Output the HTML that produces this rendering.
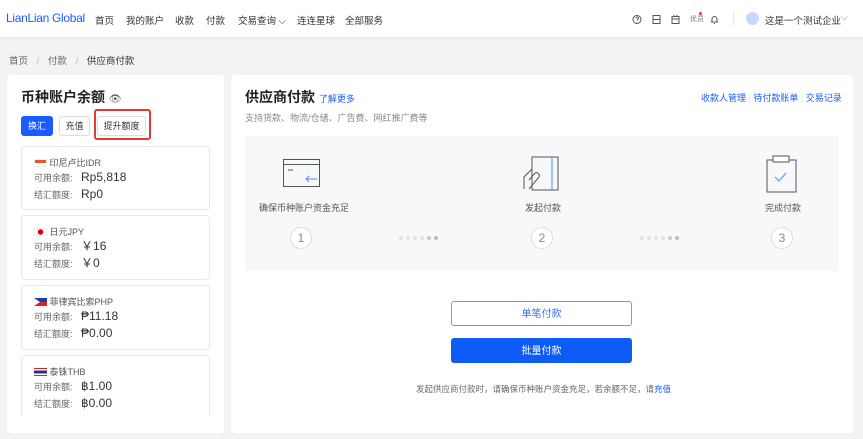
<!DOCTYPE html>
<html><head><meta charset="utf-8"><style>
*{margin:0;padding:0;box-sizing:border-box}
body{width:863px;height:439px;overflow:hidden;background:#f2f3f5;font-family:"Liberation Sans","Noto Sans CJK SC",sans-serif;color:#333;position:relative}
.a{position:absolute;white-space:nowrap}
.nav{position:absolute;left:0;top:0;width:863px;height:37px;background:#fff;box-shadow:0 1px 3px rgba(0,0,0,.06)}
.nav .m{font-size:9.5px;color:#333;top:13px}
.card{position:absolute;background:#fff;border-radius:4px}
.cc{position:absolute;left:21px;width:189px;border:1px solid #e6e8eb;border-radius:4px;background:#fff}
.cc .n{position:absolute;left:12px;top:9px;font-size:9px;color:#555}
.cc .r{position:absolute;left:12px;height:16px;line-height:16px;font-size:9px;color:#666}
.cc .r b{font-weight:normal;font-size:12px;color:#333;margin-left:6px}
.lab{font-size:9px;color:#555}
.circ{position:absolute;width:22px;height:22px;border:1px solid #ddd;border-radius:50%;text-align:center;line-height:20px;font-size:12px;color:#888;background:#fff}
.dots{position:absolute;font-size:0}
.dots i{display:inline-block;width:4px;height:4px;border-radius:50%;background:#dfe1e4;margin-right:3px}
</style></head><body>
<div class="nav">
<div class="a" style="left:6px;top:11px;font-size:12px;color:#1a5cff;letter-spacing:-0.3px">LianLian Global</div>
<div class="a m" style="left:95px">首页</div>
<div class="a m" style="left:126px">我的账户</div>
<div class="a m" style="left:175px">收款</div>
<div class="a m" style="left:206px">付款</div>
<div class="a m" style="left:238px">交易查询 ⌵</div>
<div class="a m" style="left:297px">连连星球</div>
<div class="a m" style="left:345px">全部服务</div>
<svg class="a" style="left:632px;top:14px" width="100" height="11" viewBox="0 0 100 11" fill="none" stroke="#555" stroke-width="1">
<circle cx="5" cy="5.5" r="4"/><path d="M4 4.2a1.2 1.2 0 1 1 1.5 1.2V6.5M5 7.8v.4"/>
<rect x="21" y="1.5" width="7" height="8"/><path d="M21 5.5h7"/>
<rect x="40" y="2.5" width="7" height="7"/><path d="M40 5h7M42 1v2M45 1v2"/>
<path d="M79 8h7M80 8V5a2.5 2.5 0 0 1 5 0v3M82 9.5h1"/></svg>
<div class="a" style="left:690px;top:14px;font-size:7px;color:#777">优员</div>
<div class="a" style="left:699px;top:12px;width:3px;height:3px;border-radius:50%;background:#f33"></div>
<div class="a" style="left:733px;top:13px;width:1px;height:12px;background:#e5e5e5"></div>
<div class="a" style="left:746px;top:12px;width:13px;height:13px;border-radius:50%;background:#c6d8ff"></div>
<div class="a" style="left:765px;top:13px;font-size:9.5px;color:#333">这是一个测试企业</div>
<div class="a" style="left:841px;top:12px;font-size:9px;color:#777">⌵</div>
</div>
<div class="a" style="left:9px;top:53px;font-size:9.5px;color:#666">首页 <span style="color:#bbb;margin:0 6px">/</span> 付款 <span style="color:#bbb;margin:0 6px">/</span> <span style="color:#333">供应商付款</span></div>

<div class="card" style="left:7px;top:75px;width:217px;height:358px">
<div class="a" style="left:14px;top:12px;font-size:14px;font-weight:bold;color:#222">币种账户余额 <span style="font-weight:normal;font-size:10px;color:#555">👁</span></div>
<div class="a" style="left:14px;top:41px;width:32px;height:20px;background:#1a5cff;border-radius:3px;color:#fff;font-size:9px;text-align:center;line-height:20px">换汇</div>
<div class="a" style="left:52px;top:41px;width:31px;height:20px;border:1px solid #ddd;border-radius:3px;font-size:9px;text-align:center;line-height:18px">充值</div>
<div class="a" style="left:90px;top:41px;width:49px;height:20px;border:1px solid #ddd;border-radius:3px;font-size:9px;text-align:center;line-height:18px">提升额度</div>
<div class="a" style="left:87px;top:34px;width:57px;height:31px;border:2px solid #e53935;border-radius:3px"></div>
</div>
<div style="position:absolute;left:7px;top:140px;width:217px;height:276px;overflow:hidden">
<div class="cc" style="left:14px;top:6px;height:64px"><div class="n"><span style="display:inline-block;width:13px;height:8px;background:linear-gradient(#e52 50%,#fff 50%);border:1px solid #eee;vertical-align:-1px"></span> 印尼卢比IDR</div><div class="r" style="top:22px">可用余额: <b>Rp5,818</b></div><div class="r" style="top:39px">结汇额度: <b>Rp0</b></div></div>
<div class="cc" style="left:14px;top:75px;height:65px"><div class="n"><span style="display:inline-block;width:13px;height:8px;background:radial-gradient(circle,#d00 2.5px,#fff 3px);border:1px solid #eee;vertical-align:-1px"></span> 日元JPY</div><div class="r" style="top:22px">可用余额: <b>￥16</b></div><div class="r" style="top:39px">结汇额度: <b>￥0</b></div></div>
<div class="cc" style="left:14px;top:145px;height:65px"><div class="n"><span style="display:inline-block;width:13px;height:8px;background:linear-gradient(#1c3fa8 50%,#d22 50%);vertical-align:-1px;position:relative"><span style="position:absolute;left:0;top:0;border-left:6px solid #fff;border-top:4px solid transparent;border-bottom:4px solid transparent"></span></span> 菲律宾比索PHP</div><div class="r" style="top:22px">可用余额: <b>₱11.18</b></div><div class="r" style="top:39px">结汇额度: <b>₱0.00</b></div></div>
<div class="cc" style="left:14px;top:215px;height:70px"><div class="n"><span style="display:inline-block;width:13px;height:8px;background:linear-gradient(#d22 15%,#fff 15%,#fff 33%,#238 33%,#238 67%,#fff 67%,#fff 85%,#d22 85%);vertical-align:-1px"></span> 泰铢THB</div><div class="r" style="top:22px">可用余额: <b>฿1.00</b></div><div class="r" style="top:39px">结汇额度: <b>฿0.00</b></div></div>
</div>

<div class="card" style="left:231px;top:75px;width:622px;height:358px">
<div class="a" style="left:14px;top:12px;font-size:14px;font-weight:bold;color:#222">供应商付款 <span style="font-weight:normal;font-size:9px;color:#1a5cff">了解更多</span></div>
<div class="a" style="left:14px;top:36px;font-size:9px;color:#888">支持货款、物流/仓储、广告费、网红推广费等</div>
<div class="a" style="left:470px;top:16px;font-size:9px;color:#1a5cff">收款人管理 <span style="color:#ddd">|</span> 待付款账单 <span style="color:#ddd">|</span> 交易记录</div>
<div class="a" style="left:14px;top:61px;width:594px;height:135px;background:#f7f8fa">
<svg class="a" style="left:38px;top:22px" width="40" height="30" fill="none" stroke="#555" stroke-width="1"><rect x="0.5" y="1.5" width="36" height="27"/><path d="M.5 6.5h36M5 12h5"/><path d="M34 21H23M26 18l-3 3 3 3" stroke="#4a90ff"/></svg>
<div class="a lab" style="left:14px;top:65px">确保币种账户资金充足</div>
<div class="circ" style="left:45px;top:91px">1</div>
<div class="dots" style="left:154px;top:100px"><i></i><i></i><i></i><i></i><i style="background:#c8cacd"></i><i style="background:#bbb"></i></div>
<svg class="a" style="left:278px;top:20px" width="38" height="35" fill="none" stroke="#555" stroke-width="1"><rect x="9" y="1" width="26" height="33"/><path d="M29 1v33" stroke="#4a90ff"/><path d="M1 33V21l8-8M6 33l10-12a3 3 0 0 0-4-4l-6 7"/></svg>
<div class="a lab" style="left:280px;top:65px">发起付款</div>
<div class="circ" style="left:286px;top:91px">2</div>
<div class="dots" style="left:395px;top:100px"><i></i><i></i><i></i><i></i><i style="background:#c8cacd"></i><i style="background:#bbb"></i></div>
<svg class="a" style="left:521px;top:19px" width="32" height="38" fill="none" stroke="#555" stroke-width="1"><rect x="1" y="5" width="29" height="32"/><rect x="7" y="1" width="16" height="6" fill="#fff"/><path d="M9 22l4 4 7-8" stroke="#4a90ff"/></svg>
<div class="a lab" style="left:520px;top:65px">完成付款</div>
<div class="circ" style="left:526px;top:91px">3</div>
</div>
<div class="a" style="left:220px;top:226px;width:181px;height:25px;border:1px solid #6f9bff;border-radius:3px;color:#3a6df0;font-size:10px;text-align:center;line-height:25px">单笔付款</div>
<div class="a" style="left:220px;top:263px;width:181px;height:25px;background:#0d5cf5;border-radius:3px;color:#fff;font-size:10px;text-align:center;line-height:27px">批量付款</div>
<div class="a" style="left:185px;top:308px;font-size:8.5px;color:#666">发起供应商付款时，请确保币种账户资金充足，若余额不足，请<span style="color:#1a5cff">充值</span></div>
</div>
</body></html>
